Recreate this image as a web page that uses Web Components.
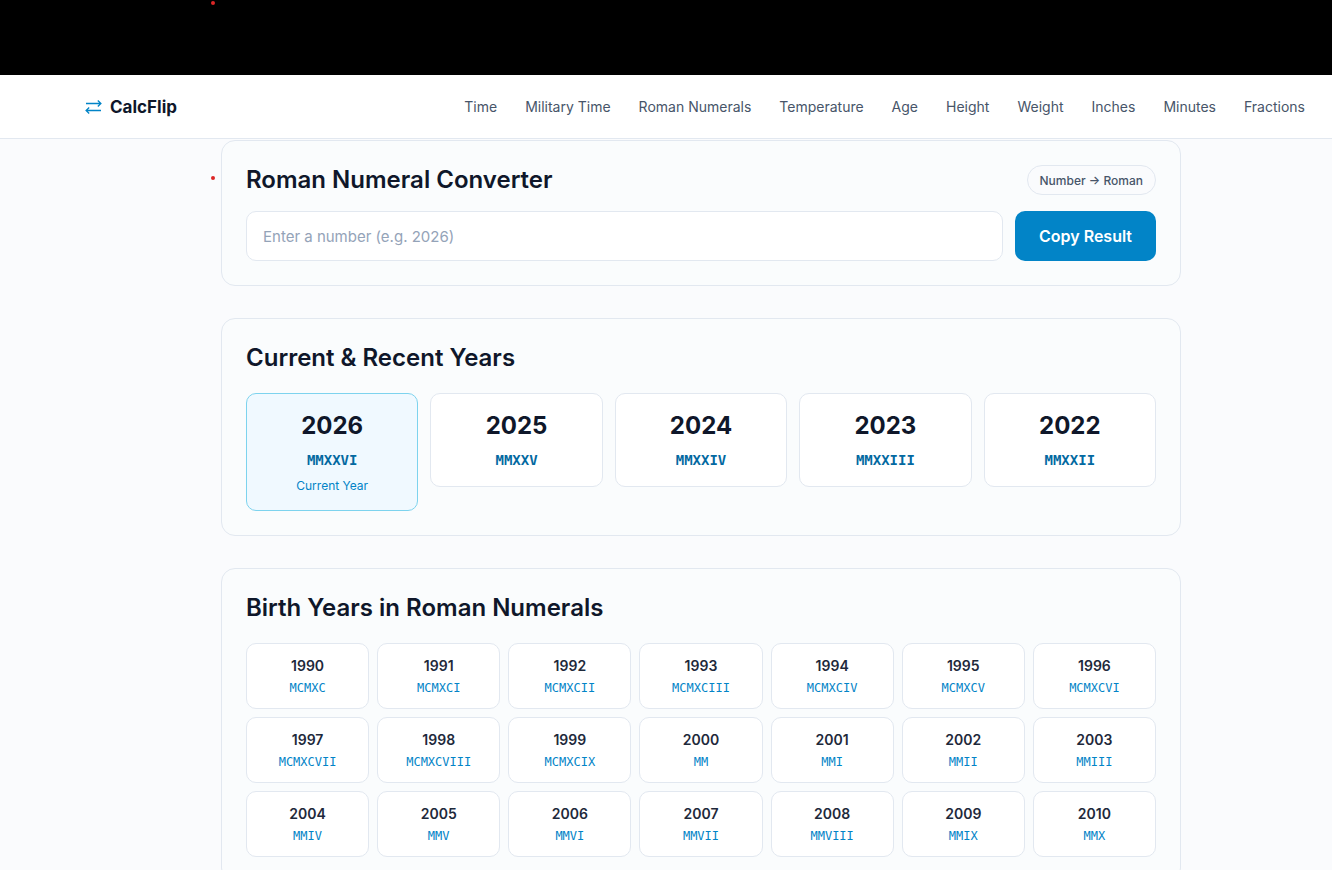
<!DOCTYPE html>
<html lang="en">
<head>
<meta charset="utf-8">
<meta name="viewport" content="width=device-width, initial-scale=1">
<title>Roman Numeral Converter - CalcFlip</title>
<style>
  :root {
    --ink: #0f172a;
    --body: #475569;
    --line: #e2e8f0;
    --accent: #0284c7;
    --accent-dark: #0369a1;
    --page: #fafbfd;
  }

  body {
    margin: 0;
    background: var(--page);
    color: var(--ink);
    font-family: Inter, "Liberation Sans", sans-serif;
  }

  main {
    padding: 1px 0 32px 70px;
  }

  .column {
    display: flex;
    flex-direction: column;
    gap: 32px;
    max-width: 960px;
    margin: 0 auto;
  }
</style>
</head>
<body>

<top-banner></top-banner>

<site-header>
  <nav-link href="#time">Time</nav-link>
  <nav-link href="#military-time">Military Time</nav-link>
  <nav-link href="#roman-numerals">Roman Numerals</nav-link>
  <nav-link href="#temperature">Temperature</nav-link>
  <nav-link href="#age">Age</nav-link>
  <nav-link href="#height">Height</nav-link>
  <nav-link href="#weight">Weight</nav-link>
  <nav-link href="#inches">Inches</nav-link>
  <nav-link href="#minutes">Minutes</nav-link>
  <nav-link href="#fractions">Fractions</nav-link>
</site-header>

<main>
  <div class="column">
    <roman-converter></roman-converter>
    <section-card>
      <span slot="title">Current &amp; Recent Years</span>
      <recent-years from="2026" count="5"></recent-years>
    </section-card>
    <section-card>
      <span slot="title">Birth Years in Roman Numerals</span>
      <birth-years from="1990" to="2010"></birth-years>
    </section-card>
  </div>
</main>

<script>
const NUMERALS = [
  [1000, 'M'], [900, 'CM'], [500, 'D'], [400, 'CD'],
  [100, 'C'], [90, 'XC'], [50, 'L'], [40, 'XL'],
  [10, 'X'], [9, 'IX'], [5, 'V'], [4, 'IV'], [1, 'I']
]

function toRoman(n) {
  let out = ''
  for (const [value, letters] of NUMERALS) {
    while (n >= value) {
      out += letters
      n -= value
    }
  }
  return out
}

class TopBanner extends HTMLElement {
  constructor() {
    super()
    this.attachShadow({ mode: 'open' }).innerHTML = `
      <style>
        :host {
          display: block;
          position: relative;
          height: 75px;
          background: #000;
        }
        /* red marker dots, floating over the page */
        i {
          position: absolute;
          left: 211px;
          width: 4px;
          height: 4px;
          border-radius: 50%;
          background: #dc2626;
        }
        .first { top: 1px; }
        .second { top: 176px; }
      </style>
      <i class="first"></i>
      <i class="second"></i>`
  }
}
customElements.define('top-banner', TopBanner)

class SiteHeader extends HTMLElement {
  constructor() {
    super()
    this.attachShadow({ mode: 'open' }).innerHTML = `
      <style>
        :host {
          display: block;
          background: #fff;
          border-bottom: 1px solid var(--line);
        }
        header {
          display: flex;
          align-items: center;
          justify-content: space-between;
          height: 63px;
          padding: 0 27px 0 85px;
        }
        .logo {
          display: flex;
          align-items: center;
          gap: 8px;
          color: var(--ink);
          font-size: 17px;
          font-weight: 700;
          line-height: 20px;
          text-decoration: none;
        }
        nav {
          display: flex;
          gap: 28px;
        }
      </style>
      <header>
        <a class="logo" href="#home">
          <svg width="17" height="16" viewBox="0 0 17 16" fill="none" stroke="#0284c7" stroke-width="1.3" aria-hidden="true">
            <path d="M1 4.5H15.8M12.8 1.5L15.9 4.5L12.8 7.5M16 11.5H1.2M4.2 8.5L1.1 11.5L4.2 14.5"/>
          </svg>
          <span>CalcFlip</span>
        </a>
        <nav><slot></slot></nav>
      </header>`
  }
}
customElements.define('site-header', SiteHeader)

class NavLink extends HTMLElement {
  constructor() {
    super()
    this.attachShadow({ mode: 'open' }).innerHTML = `
      <style>
        :host {
          display: flex;
        }
        a {
          color: var(--body);
          font-size: 14px;
          line-height: 20px;
          text-decoration: none;
          white-space: nowrap;
        }
        a:hover { color: var(--accent); }
      </style>
      <a><slot></slot></a>`
  }

  connectedCallback() {
    this.shadowRoot.querySelector('a').href = this.getAttribute('href')
  }
}
customElements.define('nav-link', NavLink)

class SectionCard extends HTMLElement {
  constructor() {
    super()
    this.attachShadow({ mode: 'open' }).innerHTML = `
      <style>
        :host {
          display: block;
          padding: 24px;
          border: 1px solid var(--line);
          border-radius: 14px;
          background: #fafcfd;
        }
        .head {
          display: flex;
          align-items: center;
          justify-content: space-between;
          margin-bottom: 20px;
        }
        :host([compact]) .head { margin-bottom: 16px; }
        h2 {
          margin: 0;
          font-size: 24px;
          font-weight: 600;
          line-height: 30px;
        }
      </style>
      <div class="head">
        <h2><slot name="title"></slot></h2>
        <slot name="action"></slot>
      </div>
      <slot></slot>`
  }
}
customElements.define('section-card', SectionCard)

class RomanConverter extends HTMLElement {
  constructor() {
    super()
    this.attachShadow({ mode: 'open' }).innerHTML = `
      <style>
        :host { display: block; }
        button {
          font-family: inherit;
          cursor: pointer;
        }
        .mode {
          box-sizing: border-box;
          height: 30px;
          padding: 0 12px;
          border: 1px solid var(--line);
          border-radius: 15px;
          background: var(--page);
          color: var(--body);
          font-size: 12px;
          font-weight: 500;
        }
        form {
          display: flex;
          gap: 12px;
        }
        input {
          flex: 1;
          min-width: 0;
          box-sizing: border-box;
          height: 50px;
          padding: 0 16px;
          border: 1px solid var(--line);
          border-radius: 10px;
          background: #fff;
          color: var(--ink);
          font: 15px Inter, "Liberation Sans", sans-serif;
        }
        input::placeholder { color: #94a3b8; }
        .copy {
          height: 50px;
          padding: 0 24px;
          border: 0;
          border-radius: 10px;
          background: var(--accent);
          color: #fff;
          font-size: 16px;
          font-weight: 600;
        }
      </style>
      <section-card compact>
        <span slot="title">Roman Numeral Converter</span>
        <button slot="action" class="mode" type="button">Number → Roman</button>
        <form>
          <input type="text" aria-label="Number" placeholder="Enter a number (e.g. 2026)">
          <button class="copy" type="button">Copy Result</button>
        </form>
      </section-card>`
  }

  connectedCallback() {
    const input = this.shadowRoot.querySelector('input')
    this.shadowRoot.querySelector('form').addEventListener('submit', e => e.preventDefault())
    this.shadowRoot.querySelector('.copy').addEventListener('click', () => {
      const n = parseInt(input.value, 10)
      if (n > 0 && n < 4000) navigator.clipboard?.writeText(toRoman(n))
    })
  }
}
customElements.define('roman-converter', RomanConverter)

class YearCard extends HTMLElement {
  constructor() {
    super()
    this.attachShadow({ mode: 'open' })
  }

  connectedCallback() {
    const year = Number(this.getAttribute('year'))
    this.shadowRoot.innerHTML = `
      <style>
        :host {
          display: block;
          padding: 12px 8px;
          border: 1px solid var(--line);
          border-radius: 10px;
          background: #fff;
          text-align: center;
        }
        .year {
          color: #1e293b;
          font-size: 14px;
          font-weight: 600;
          line-height: 20px;
        }
        .roman {
          margin-top: 4px;
          color: var(--accent);
          font-family: "DejaVu Sans Mono", "Liberation Mono", monospace;
          font-size: 12px;
          line-height: 16px;
        }
        .note {
          margin-top: 8px;
          color: var(--accent);
          font-size: 12px;
          line-height: 16px;
        }
        :host([large]) { padding: 16px; }
        :host([large]) .year {
          color: var(--ink);
          font-size: 24px;
          font-weight: 700;
          line-height: 32px;
        }
        :host([large]) .roman {
          margin-top: 8px;
          color: var(--accent-dark);
          font-size: 14px;
          font-weight: 700;
          line-height: 20px;
        }
        :host([current]) {
          border-color: #7dd3ee;
          background: #f0f9ff;
        }
      </style>
      <div class="year">${year}</div>
      <div class="roman">${toRoman(year)}</div>
      ${this.hasAttribute('current') ? '<div class="note">Current Year</div>' : ''}`
  }
}
customElements.define('year-card', YearCard)

class RecentYears extends HTMLElement {
  constructor() {
    super()
    this.attachShadow({ mode: 'open' })
  }

  connectedCallback() {
    const from = Number(this.getAttribute('from'))
    const count = Number(this.getAttribute('count'))
    let cards = ''
    for (let i = 0; i < count; i++) {
      cards += `<year-card large ${i === 0 ? 'current' : ''} year="${from - i}"></year-card>`
    }
    this.shadowRoot.innerHTML = `
      <style>
        :host {
          display: grid;
          grid-template-columns: repeat(5, 1fr);
          align-items: start;
          gap: 12px;
        }
      </style>
      ${cards}`
  }
}
customElements.define('recent-years', RecentYears)

class BirthYears extends HTMLElement {
  constructor() {
    super()
    this.attachShadow({ mode: 'open' })
  }

  connectedCallback() {
    const from = Number(this.getAttribute('from'))
    const to = Number(this.getAttribute('to'))
    let cards = ''
    for (let year = from; year <= to; year++) {
      cards += `<year-card year="${year}"></year-card>`
    }
    this.shadowRoot.innerHTML = `
      <style>
        :host {
          display: grid;
          grid-template-columns: repeat(7, 1fr);
          gap: 8px;
        }
      </style>
      ${cards}`
  }
}
customElements.define('birth-years', BirthYears)
</script>
</body>
</html>
